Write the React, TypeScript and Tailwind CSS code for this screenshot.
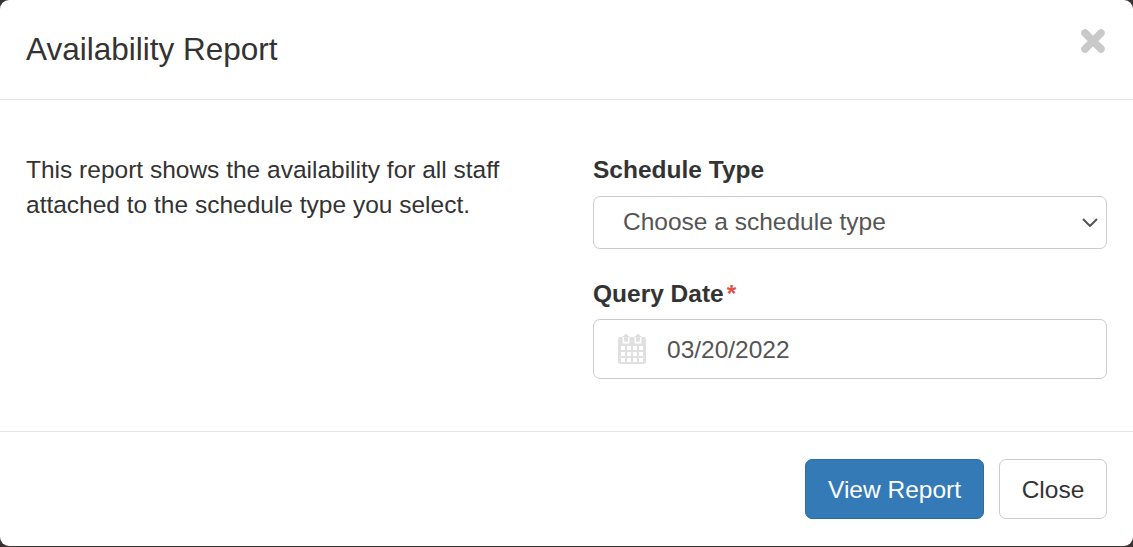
import React from 'react';

const CloseIcon = () => (
  <svg width="26" height="26" viewBox="0 0 26 26" className="block">
    <path d="M5 5 L21 21 M21 5 L5 21" stroke="#c9c9c9" strokeWidth="7.5" strokeLinecap="round" fill="none" />
  </svg>
);

const CalendarIcon = () => (
  <svg width="28" height="30" viewBox="0 0 28 30" className="block">
    <path
      fill="#e0e0e0"
      fillRule="evenodd"
      d="M2 3h24a2 2 0 0 1 2 2v23a2 2 0 0 1-2 2H2a2 2 0 0 1-2-2V5a2 2 0 0 1 2-2zM4.500 2v7.500h7V2zM16.500 2v7.500h7V2zM3 12v4h4v-4zM9 12v4h4v-4zM15 12v4h4v-4zM21 12v4h4v-4zM3 18v4h4v-4zM9 18v4h4v-4zM15 18v4h4v-4zM21 18v4h4v-4zM3 24v4h4v-4zM9 24v4h4v-4zM15 24v4h4v-4zM21 24v4h4v-4z"
    />
    <rect x="6" y="0" width="4" height="8" rx="2" fill="#e0e0e0" />
    <rect x="18" y="0" width="4" height="8" rx="2" fill="#e0e0e0" />
  </svg>
);

const Chevron = () => (
  <svg width="16" height="9" viewBox="0 0 16 9" className="block">
    <path d="M1 1 L8 8 L15 1" stroke="#555" strokeWidth="2" fill="none" />
  </svg>
);

export default function App() {
  return (
    <div className="h-[547px] w-[1133px] overflow-hidden bg-[#3a3232] font-['Liberation_Sans',Arial,sans-serif] text-[#333]">
      <div className="h-[546px] rounded-[9px] bg-white flex flex-col">
        {/* header */}
        <div className="h-[100px] shrink-0 border-b border-[#e5e5e5] pl-[26px] pr-[27px] flex justify-between">
          <h4 className="pt-[31px] text-[31.5px] leading-[37px]">Availability Report</h4>
          <div className="pt-[28px]"><CloseIcon /></div>
        </div>

        {/* body */}
        <div className="h-[332px] shrink-0 border-b border-[#e5e5e5] pl-[26px] pr-[26px] flex">
          <div className="w-[567px] shrink-0 pt-[52px] text-[24.5px] leading-[35px]">
            <p>This report shows the availability for all staff<br />attached to the schedule type you select.</p>
          </div>
          <div className="w-[514px] shrink-0">
            <label className="block pt-[52px] text-[24.5px] leading-[35px] font-bold">Schedule Type</label>
            <div className="mt-[9px] h-[53px] rounded-[7px] border border-[#ccc] pl-[29px] pr-[8px] flex items-center justify-between text-[24.5px] text-[#555]">
              <span>Choose a schedule type</span>
              <Chevron />
            </div>
            <label className="block mt-[27px] text-[24.5px] leading-[35px] font-bold">
              Query Date<span className="ml-[3px] text-[#e0524d]">*</span>
            </label>
            <div className="mt-[8px] h-[60px] rounded-[7px] border border-[#ccc] pl-[24px] flex items-center gap-[21px] text-[24.5px] text-[#555]">
              <CalendarIcon />
              <span className="pt-[2px]">03/20/2022</span>
            </div>
          </div>
        </div>

        {/* footer */}
        <div className="flex-1 pr-[26px] pt-[27px] flex justify-end items-start gap-[15px] text-[24.5px]">
          <button className="h-[60px] w-[179px] pt-[2px] rounded-[7px] border border-[#2e6da4] bg-[#337ab7] text-white">View Report</button>
          <button className="h-[60px] w-[108px] pt-[2px] rounded-[7px] border border-[#ccc] bg-white text-[#333]">Close</button>
        </div>
      </div>
    </div>
  );
}
